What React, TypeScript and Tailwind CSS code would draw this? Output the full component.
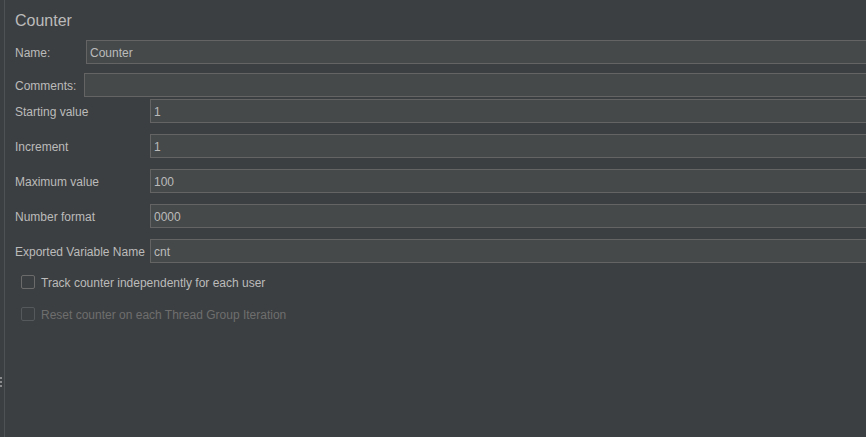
import type { ReactNode } from "react";

const font = { fontFamily: '"Liberation Sans", Arial, sans-serif' };

function Field({ value }: { value: string }) {
  return (
    <div className="-mr-[4px] flex h-[24px] flex-1 items-center border border-[#646464] bg-[#45494a] px-[3px] pt-[2px] text-[12px] text-[#bbbbbb]">
      {value}
    </div>
  );
}

function Row({ label, value, labelWidth, className }: { label: string; value: string; labelWidth: string; className: string }) {
  return (
    <div className={`flex items-center ${className}`}>
      <span className={`shrink-0 pt-[2px] text-[12px] text-[#bbbbbb] ${labelWidth}`}>{label}</span>
      <Field value={value} />
    </div>
  );
}

function Check({ label, disabled, className }: { label: ReactNode; disabled?: boolean; className: string }) {
  return (
    <div className={`flex h-[14px] items-center pl-[6px] ${className}`}>
      <span
        className={`h-[14px] w-[14px] shrink-0 rounded-[2px] border ${disabled ? "border-[#55595b]" : "border-[#6b6b6b]"}`}
      />
      <span className={`ml-[6px] pt-[1px] text-[12px] leading-[14px] ${disabled ? "text-[#6e6e6e]" : "text-[#bbbbbb]"}`}>
        {label}
      </span>
    </div>
  );
}

export default function App() {
  return (
    <div className="flex h-[437px] w-[866px] overflow-hidden bg-[#3c3f41]" style={font}>
      {/* splitter handle */}
      <div className="relative w-[4px] shrink-0">
        <div className="absolute left-0 top-[377px] flex flex-col gap-[2px]">
          <span className="h-[2px] w-[2px] bg-[#8a8c8e]" />
          <span className="h-[2px] w-[2px] bg-[#8a8c8e]" />
          <span className="h-[2px] w-[2px] bg-[#8a8c8e]" />
        </div>
      </div>
      <div className="w-px shrink-0 bg-[#4e5254]" />

      <div className="min-w-0 flex-1 pl-[10px] pt-[11px]">
        <div className="h-[20px] text-[16px] leading-[20px] text-[#bbbbbb]">Counter</div>

        <Row label="Name:" value="Counter" labelWidth="w-[71px]" className="mt-[9px]" />
        <Row label="Comments:" value="" labelWidth="w-[69px]" className="mt-[9px]" />
        <Row label="Starting value" value="1" labelWidth="w-[135px]" className="mt-[2px]" />
        <Row label="Increment" value="1" labelWidth="w-[135px]" className="mt-[11px]" />
        <Row label="Maximum value" value="100" labelWidth="w-[135px]" className="mt-[11px]" />
        <Row label="Number format" value="0000" labelWidth="w-[135px]" className="mt-[11px]" />
        <Row label="Exported Variable Name" value="cnt" labelWidth="w-[135px]" className="mt-[11px]" />

        <Check label="Track counter independently for each user" className="mt-[12px]" />
        <Check label="Reset counter on each Thread Group Iteration" disabled className="mt-[18px]" />
      </div>
    </div>
  );
}
